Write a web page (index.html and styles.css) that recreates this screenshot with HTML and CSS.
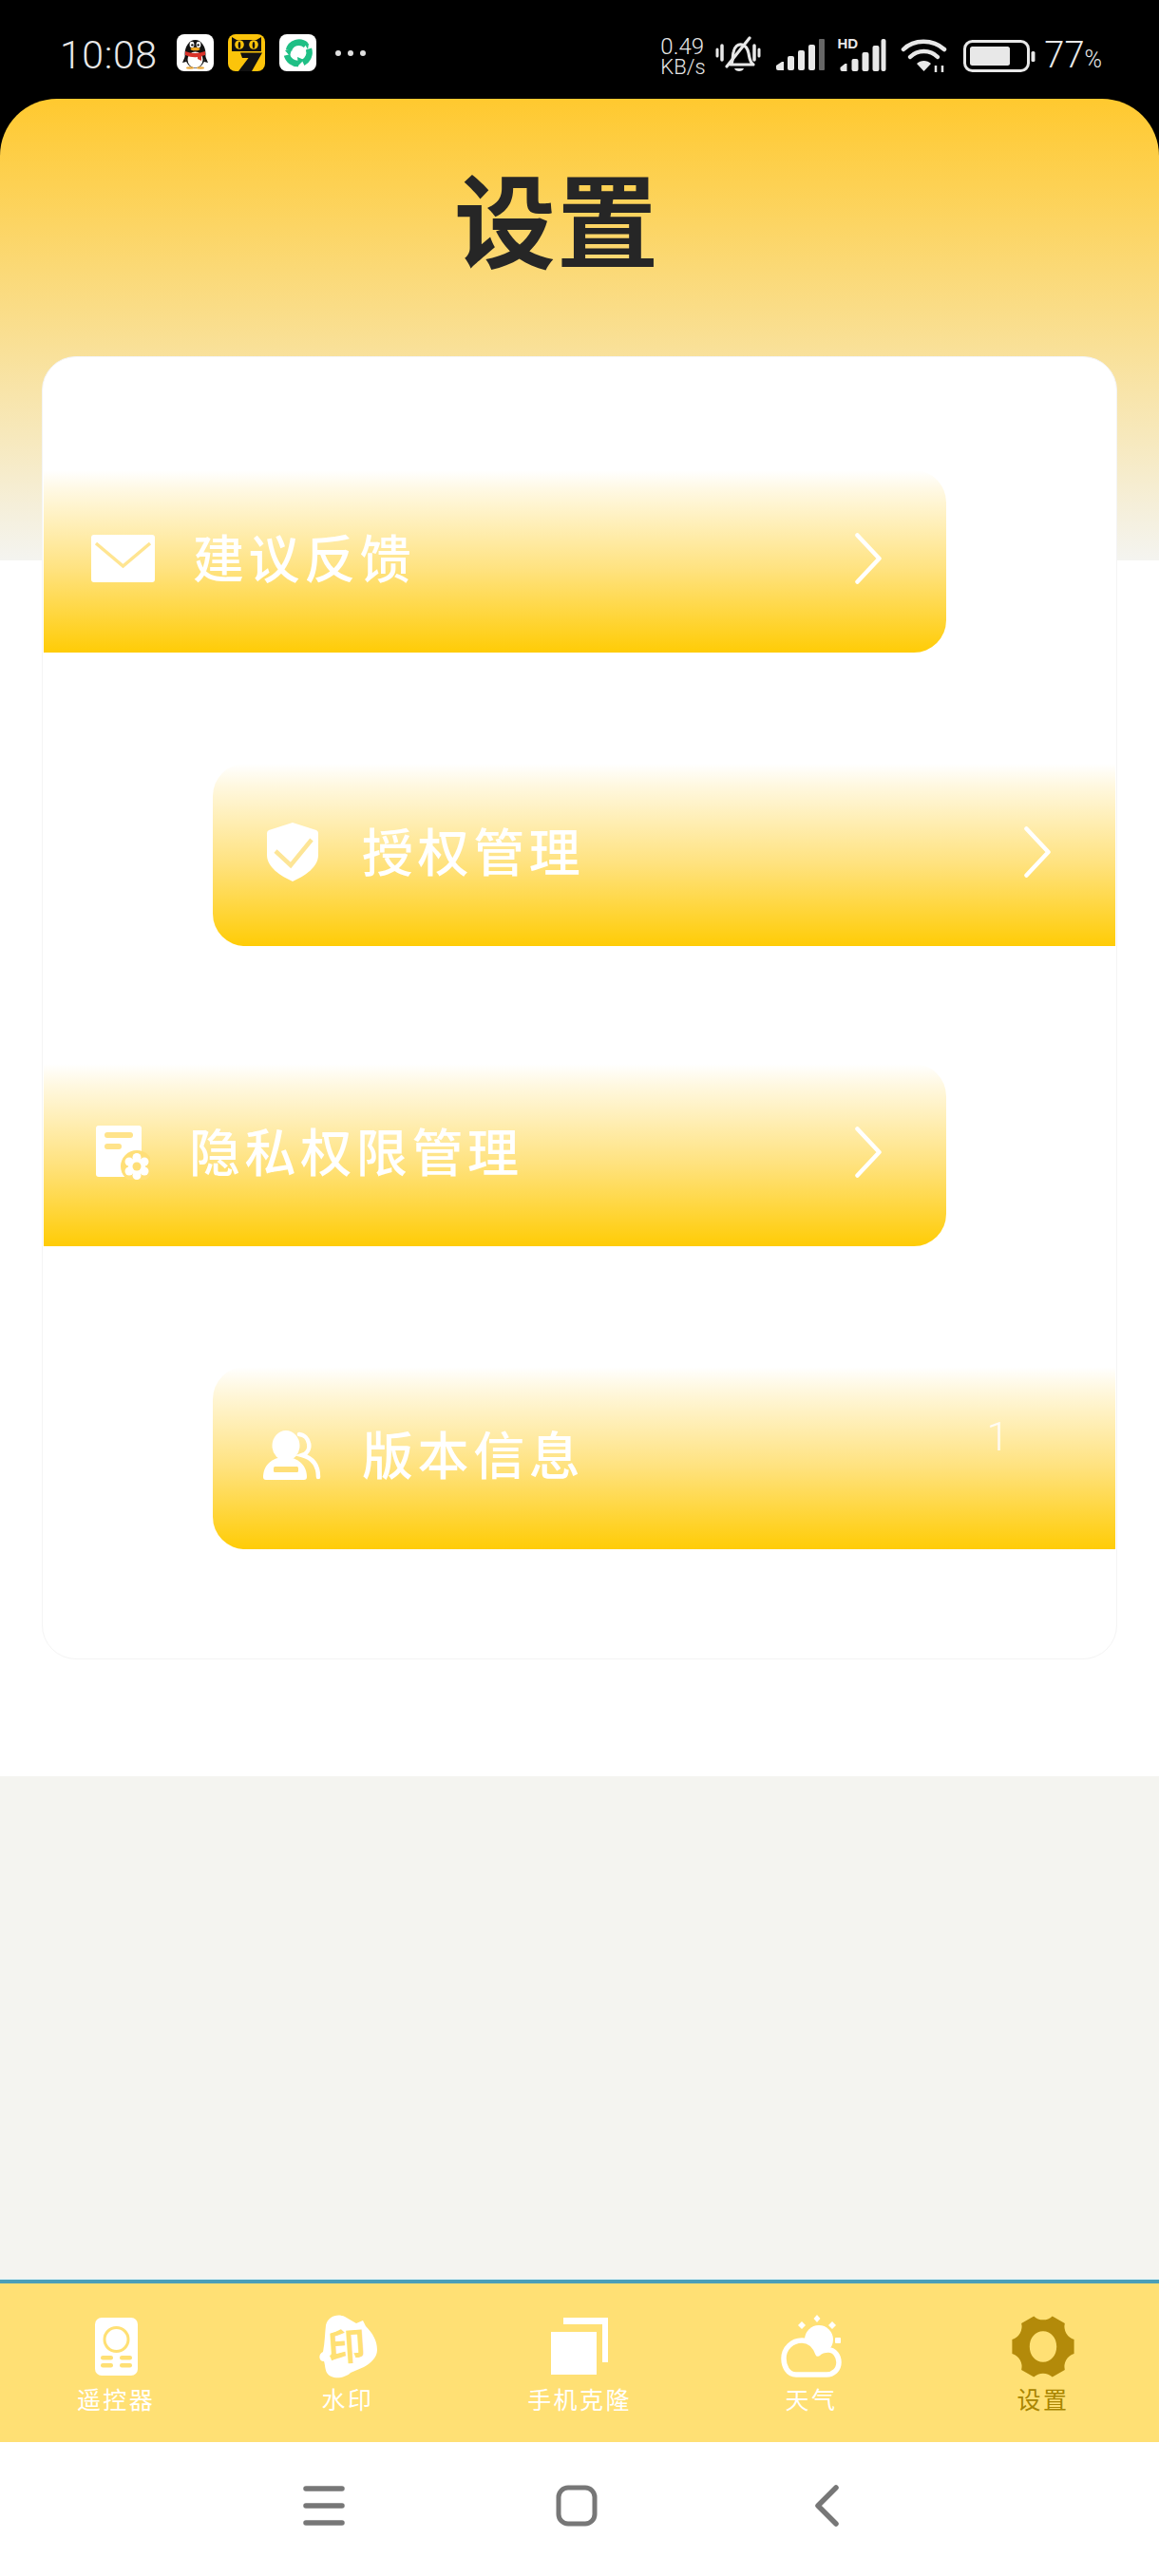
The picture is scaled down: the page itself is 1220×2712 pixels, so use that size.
FILE: index.html
```html
<!DOCTYPE html>
<html lang="zh-CN">
<head>
<meta charset="utf-8">
<title>设置</title>
<link rel="stylesheet" href="styles.css">
</head>
<body>
<div class="phone">
  <header class="status">
    <div class="status-left">
      <span class="clock">10:08</span>
      <div class="notif-icons">
        <svg class="app-icon" viewBox="0 0 39 39"><rect width="39" height="39" rx="8" fill="#fff"/><ellipse cx="19.500" cy="21" rx="11" ry="15" fill="#111"/><ellipse cx="19.500" cy="27" rx="8" ry="8.500" fill="#fff"/><ellipse cx="16" cy="11" rx="2.400" ry="3.200" fill="#fff"/><ellipse cx="23" cy="11" rx="2.400" ry="3.200" fill="#fff"/><circle cx="16.400" cy="11.400" r="1.200" fill="#111"/><circle cx="22.600" cy="11.400" r="1.200" fill="#111"/><ellipse cx="19.500" cy="15.500" rx="5" ry="1.800" fill="#f0a71e"/><path d="M9 18q10 4 21 0v4l-4 1v5l-4-2v-2q-6 1-13-2z" fill="#d8322a"/><path d="M9 23l-3 7 4-1zM30 23l3 7-4-1z" fill="#111"/><ellipse cx="14" cy="35.500" rx="4" ry="1.200" fill="#eaa73a"/><ellipse cx="25" cy="35.500" rx="4" ry="1.200" fill="#eaa73a"/></svg>
        <svg class="app-icon" viewBox="0 0 39 39"><rect width="39" height="39" rx="8" fill="#fcc40a"/><path d="M4 3l5 3h21l5-3v15H4z" fill="#111"/><circle cx="12" cy="11" r="4.800" fill="#fcc40a"/><circle cx="27" cy="11" r="4.800" fill="#fcc40a"/><ellipse cx="12" cy="11.500" rx="1.300" ry="3.400" fill="#111"/><ellipse cx="27" cy="11.500" rx="1.300" ry="3.400" fill="#111"/><path d="M13 19.500h23L25 39H11l10.500-14H15z" fill="#111"/></svg>
        <svg class="app-icon" viewBox="0 0 39 39"><rect width="39" height="39" rx="8" fill="#fff"/><g fill="none" stroke="#1fbf85" stroke-width="6.500"><path d="M10 17A11 11 0 0 1 28 11.500"/><path d="M31 15.500A12 12 0 0 1 25 30"/><path d="M20 31A12 12 0 0 1 8 22"/></g><path d="M19 24l7 3-6 6zM25 7l6 3-1 6zM6 17l7-1-2 7z" fill="#1fbf85"/></svg>
      </div>
      <div class="more-dots"><i></i><i></i><i></i></div>
    </div>
    <div class="status-right">
      <div class="netspeed"><span>0.49</span><span class="netspeed-unit">KB/s</span></div>
      <svg class="ic-bell" viewBox="0 0 49 39"><g fill="none" stroke="#e8e8e8" stroke-linecap="round"><path d="M2 14v7M46 14v7" stroke-width="3"/><path d="M7 10v15M41 10v15" stroke-width="3.500"/><path d="M16 30c3-3 2-8 3-13 1-6 5-9 9-8 4 1 6 4 7 9 1 5 1 9 5 12z" stroke-width="3.200" stroke-linejoin="round"/><path d="M12 32L36 2" stroke-width="3.200"/></g><path d="M20 34h10c-1 4-9 4-10 0z" fill="#e8e8e8"/></svg>
      <svg class="ic-signal" viewBox="0 0 51 33"><g fill="#e8e8e8"><path d="M0 28l6-4h2v9H2q-2 0-2-2z"/><rect x="12" y="18" width="7" height="15" rx="2"/><rect x="23" y="12" width="7" height="21" rx="2"/><rect x="34" y="6" width="7" height="27" rx="2"/></g><rect x="45" y="0" width="6" height="33" rx="1" fill="#666"/></svg>
      <svg class="ic-signal-hd" viewBox="0 0 51 37"><text class="hd-mark" x="0" y="13">HD</text><g fill="#e8e8e8"><path d="M3 33l5-4h2v8H5q-2 0-2-2z"/><rect x="15" y="24" width="7" height="13" rx="2"/><rect x="26" y="17" width="7" height="20" rx="2"/><rect x="37" y="10" width="7" height="27" rx="2"/><rect x="46" y="3" width="5" height="34" rx="2"/></g></svg>
      <svg class="ic-wifi" viewBox="0 0 49 37"><g fill="none" stroke="#e8e8e8" stroke-linecap="round"><path d="M3 13C14 2 34 2 46 13" stroke-width="4.500"/><path d="M10 21C18 13 31 13 39 21" stroke-width="4.500"/></g><path d="M17 28c4-4 11-4 15 0l-7.500 8z" fill="#e8e8e8"/><path d="M37 30v7M44 30v7" stroke="#e8e8e8" stroke-width="2.500"/></svg>
      <svg class="ic-battery" viewBox="0 0 76 34"><rect x="1.500" y="1.500" width="67" height="31" rx="8" fill="none" stroke="#e8e8e8" stroke-width="3"/><rect x="7" y="7" width="42" height="20" rx="2.500" fill="#e8e8e8"/><rect x="71.500" y="12" width="4" height="11" rx="1.500" fill="#e8e8e8"/></svg>
      <span class="level">77<small>%</small></span>
    </div>
  </header>

  <main class="settings">
    <h1 class="title">设置</h1>
    <section class="card">
      <a class="row row-a row-1">
        <span class="row-icon"><svg class="ic-mail" viewBox="0 0 67 50"><rect width="67" height="50" rx="3" fill="#fff"/><path d="M5 9l28.500 24L62 9" fill="none" stroke="#ffe591" stroke-width="3.500"/></svg></span>
        <span class="row-label">建议反馈</span>
        <svg class="chevron" viewBox="0 0 28 54"><path d="M2.500 2.500L25.500 27 2.500 51.500" fill="none" stroke="#fff" stroke-width="4.500" stroke-linecap="round" stroke-linejoin="round"/></svg>
      </a>
      <a class="row row-b row-2">
        <span class="row-icon"><svg class="ic-shield" viewBox="0 0 54 62"><path d="M27 0l25 8q2 1 2 3v23C54 47 40 56 27 62 14 56 0 47 0 34V11q0-2 2-3z" fill="#fff"/><path d="M9 30l16 15 22-27" fill="none" stroke="#fde596" stroke-width="4.500"/></svg></span>
        <span class="row-label">授权管理</span>
        <svg class="chevron" viewBox="0 0 28 54"><path d="M2.500 2.500L25.500 27 2.500 51.500" fill="none" stroke="#fff" stroke-width="4.500" stroke-linecap="round" stroke-linejoin="round"/></svg>
      </a>
      <a class="row row-a row-3">
        <span class="row-icon"><svg class="ic-doc" viewBox="0 0 57 57"><rect width="48" height="54" rx="3" fill="#fff"/><rect x="9" y="7" width="30" height="6" rx="3" fill="#ffe38a"/><rect x="9" y="19" width="18" height="6" rx="3" fill="#ffe38a"/><circle cx="43" cy="43" r="17" fill="#ffdf78"/><g fill="#fff"><circle cx="43" cy="33.500" r="4.500"/><circle cx="43" cy="52.500" r="4.500"/><circle cx="35" cy="38" r="4.500"/><circle cx="51" cy="38" r="4.500"/><circle cx="35" cy="48" r="4.500"/><circle cx="51" cy="48" r="4.500"/><circle cx="43" cy="43" r="9"/></g><circle cx="43" cy="43" r="4.500" fill="#ffdf78"/></svg></span>
        <span class="row-label">隐私权限管理</span>
        <svg class="chevron" viewBox="0 0 28 54"><path d="M2.500 2.500L25.500 27 2.500 51.500" fill="none" stroke="#fff" stroke-width="4.500" stroke-linecap="round" stroke-linejoin="round"/></svg>
      </a>
      <a class="row row-b row-4">
        <span class="row-icon"><svg class="ic-person" viewBox="0 0 61 52"><ellipse cx="24" cy="16" rx="14.500" ry="16" fill="#fff"/><path d="M0 49c0-12 9-21 23-21s23 9 23 21q0 3-3 3H3q-3 0-3-3z" fill="#fff"/><rect x="11" y="38" width="26" height="6" rx="1.500" fill="#ffdf78"/><path d="M38 4c11 1 15 18 3 22 11 3 17 11 17 23" fill="none" stroke="#fff" stroke-width="4.500" stroke-linecap="round"/></svg></span>
        <span class="row-label">版本信息</span>
        <span class="row-version">1</span>
      </a>
    </section>
  </main>

  <div class="filler"></div>

  <nav class="tabs">
    <a class="tab">
      <span class="tab-icon"><svg class="ic-remote" viewBox="0 0 45 61"><rect width="45" height="61" rx="7" fill="#fff"/><circle cx="22.500" cy="23" r="12.500" fill="none" stroke="#ffe074" stroke-width="3"/><g fill="#ffe074"><rect x="6" y="40" width="13" height="4.500" rx="2.200"/><rect x="26" y="40" width="13" height="4.500" rx="2.200"/><rect x="6" y="48" width="13" height="4.500" rx="2.200"/><rect x="26" y="48" width="13" height="4.500" rx="2.200"/></g></svg></span>
      <span class="tab-label">遥控器</span>
    </a>
    <a class="tab">
      <span class="tab-icon"><svg class="ic-stamp" viewBox="0 0 62 68"><path d="M8 12C10 3 20-1 28 3l12 7 7-3 3 6c7 7 12 15 12 25 0 8-7 14-14 18l-14 6c-6 6-20 8-25 0-2-4-2-10-3-12-6 0-6-8-1-10 2-10 2-20 3-28z" fill="#fff"/><text class="stamp-mark" x="10" y="49" transform="rotate(-4 30 36)">印</text></svg></span>
      <span class="tab-label">水印</span>
    </a>
    <a class="tab">
      <span class="tab-icon"><svg class="ic-clone" viewBox="0 0 60 60"><rect y="15" width="48" height="45" fill="#fff"/><path d="M13 0h47v47h-6V7H13z" fill="#fff"/></svg></span>
      <span class="tab-label">手机克隆</span>
    </a>
    <a class="tab">
      <span class="tab-icon"><svg class="ic-weather" viewBox="0 0 64 66"><g fill="#fff"><circle cx="40" cy="26" r="15"/><path d="M38 0l3.500 4-3.500 4-3.500-4zM22 7l4 4-4 4-4-4zM54 7l4 4-4 4-4-4z"/><rect x="57" y="24" width="6" height="6" rx="1"/></g><path d="M16 63C7 63 3 54 3 46 3 35 12 27 22 27c9 0 14 6 17 14 3-3 7-4 11-4 7 0 11 7 11 13 0 8-6 13-13 13z" fill="#ffe074" stroke="#fff" stroke-width="5.500" stroke-linejoin="round"/></svg></span>
      <span class="tab-label">天气</span>
    </a>
    <a class="tab tab-active">
      <span class="tab-icon"><svg class="ic-gear" viewBox="0 0 68 66"><path fill-rule="evenodd" fill="#b38a0a" d="M66.100 25.600V40.400A14 14 0 0 0 56.500 57.100L43.600 64.600A14 14 0 0 0 24.400 64.600L11.500 57.100A14 14 0 0 0 1.900 40.400V25.600A14 14 0 0 0 11.500 8.900L24.400 1.400A14 14 0 0 0 43.600 1.400L56.500 8.900A14 14 0 0 0 66.100 25.600ZM34 17C26 17 20 24 20 33S26 49 34 49 48 42 48 33 42 17 34 17Z"/></svg></span>
      <span class="tab-label">设置</span>
    </a>
  </nav>

  <footer class="nav-keys">
    <svg class="key" viewBox="0 0 44 44"><path d="M3 4h38M3 22h38M3 40h38" stroke="#777" stroke-width="5.500" stroke-linecap="round"/></svg>
    <svg class="key" viewBox="0 0 44 44"><rect x="3" y="3" width="38" height="38" rx="10" fill="none" stroke="#777" stroke-width="5"/></svg>
    <svg class="key" viewBox="0 0 44 44"><path d="M29 3L10 22l19 19" fill="none" stroke="#777" stroke-width="5.500" stroke-linecap="round" stroke-linejoin="round"/></svg>
  </footer>
</div>
</body>
</html>
```

FILE: styles.css
```css
* { box-sizing: border-box; }

html, body { margin: 0; padding: 0; background: #000; }

body { font-family: "Noto Sans CJK SC", "Noto Sans", sans-serif; }

.phone {
  width: 1220px;
  height: 2712px;
  display: flex;
  flex-direction: column;
  background: #000;
  overflow: hidden;
}

/* status bar */
.status {
  height: 104px;
  flex: none;
  display: flex;
  justify-content: space-between;
  padding: 36px 60px 0 63px;
  color: #e8e8e8;
  font-family: Roboto, "Liberation Sans", sans-serif;
  font-weight: 300;
}
.status-left, .status-right { display: flex; align-items: flex-start; }
.clock { font-size: 41px; line-height: 44px; width: 123px; letter-spacing: .6px; }
.notif-icons { display: flex; gap: 15px; }
.app-icon { width: 39px; height: 39px; display: block; }
.more-dots { display: flex; gap: 7px; margin: 17px 0 0 20px; }
.more-dots i { width: 6px; height: 6px; border-radius: 50%; background: #e0e0e0; }

.netspeed { display: flex; flex-direction: column; font-size: 24px; line-height: 21px; width: 58px; margin-top: 3px; }
.netspeed-unit { font-size: 22px; }
.ic-bell { width: 49px; height: 39px; margin-top: 2px; }
.ic-signal { width: 51px; height: 33px; margin: 5px 0 0 15px; }
.ic-signal-hd { width: 52px; height: 37px; margin: 2px 0 0 13px; }
.hd-mark { font: 700 15px "Liberation Sans", sans-serif; fill: #e8e8e8; }
.ic-wifi { width: 49px; height: 37px; margin: 3px 0 0 15px; }
.ic-battery { width: 76px; height: 34px; margin: 6px 0 0 17px; }
.level { font-size: 38px; line-height: 44px; margin-left: 9px; }
.level small { font-size: 25px; }

/* settings page */
.settings {
  height: 1766px;
  flex: none;
  border-radius: 60px 60px 0 0;
  background: linear-gradient(180deg, #ffc92f 0, #f4f4f0 486px, #fff 486px);
  padding-top: 55px;
}
.title {
  margin: 0;
  height: 216px;
  padding-right: 48px;
  text-align: center;
  font-size: 107px;
  line-height: 138px;
  font-weight: 700;
  color: #262626;
  letter-spacing: 1px;
}
.card {
  width: 1132px;
  height: 1372px;
  margin-left: 44px;
  padding: 0 1px;
  display: flex;
  flex-direction: column;
  background: #fff;
  border: 1px solid #f4f4f4;
  border-radius: 36px;
}

.row {
  height: 192px;
  width: 950px;
  flex: none;
  display: flex;
  align-items: center;
  padding: 0 68px 6px 50px;
  color: #fff;
  background: linear-gradient(180deg, #fff 0, #fff8e0 12%, #ffe27e 55%, #ffcc06 100%);
}
.row-a { border-radius: 0 34px 34px 0; }
.row-b { border-radius: 34px 0 0 34px; align-self: flex-end; }
.row-1 { margin-top: 119px; }
.row-2 { margin-top: 117px; }
.row-3 { margin-top: 124px; }
.row-4 { margin-top: 127px; }

.row-icon {
  width: 67px;
  margin-right: 40px;
  display: flex;
  justify-content: center;
  flex: none;
}
.row-3 .row-icon { margin-right: 36px; }
.row-label {
  font-size: 54px;
  line-height: 60px;
  letter-spacing: 4.600px;
  font-weight: 500;
  margin-bottom: 4px;
}
.chevron { width: 28px; height: 54px; margin-left: auto; }
.row-version {
  margin: 0 44px 38px auto;
  font-family: Roboto, sans-serif;
  font-weight: 300;
  font-size: 42px;
  line-height: 44px;
  color: #fff;
  opacity: .85;
}
.ic-mail { width: 67px; height: 50px; display: block; }
.ic-shield { width: 54px; height: 62px; display: block; }
.ic-doc { width: 57px; height: 57px; display: block; }
.ic-person { width: 61px; height: 52px; display: block; }

.filler {
  height: 530px;
  flex: none;
  background: #f4f4f0;
}

/* bottom tabs */
.tabs {
  height: 171px;
  flex: none;
  display: grid;
  grid-template-columns: repeat(5, 1fr);
  background: #ffe074;
  border-top: 4px solid #4b9fb8;
  box-shadow: 0 -1px 0 #dff4f8;
}
.tab {
  display: flex;
  flex-direction: column;
  align-items: center;
  color: #fff;
  padding-top: 31px;
}
.tab-icon { height: 70px; display: flex; align-items: center; justify-content: center; }
.tab-label { font-size: 25px; line-height: 32px; letter-spacing: 2.400px; margin-top: 4px; font-weight: 400; }
.tab-active { color: #a98500; }
.ic-remote { width: 45px; height: 61px; }
.ic-stamp { width: 62px; height: 68px; }
.stamp-mark { font: 700 40px "Noto Sans CJK SC", sans-serif; fill: #ffe074; }
.ic-clone { width: 60px; height: 60px; }
.ic-weather { width: 64px; height: 66px; }
.ic-gear { width: 70px; height: 67px; }

/* system navigation keys */
.nav-keys {
  flex: 1;
  background: #fff;
  display: flex;
  justify-content: center;
  gap: 222px;
  padding: 45px 6px 0 0;
}
.key { width: 44px; height: 44px; }
```
